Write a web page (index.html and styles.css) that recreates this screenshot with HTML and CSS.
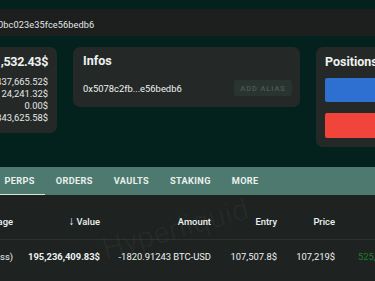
FILE: index.html
```html
<!DOCTYPE html>
<html lang="en">
<head>
    <meta charset="UTF-8">
    <meta name="viewport" content="width=device-width, initial-scale=1.0">
    <title>Portfolio</title>
    <link rel="stylesheet" href="styles.css">
</head>
<body>
    <div class="topbar">
        <span class="address">0bc023e35fce56bedb6</span>
    </div>

    <div class="cards">
        <div class="card summary">
            <div class="total">$1,532.43$</div>
            <div class="line">1,437,665.52$</div>
            <div class="line">24,241.32$</div>
            <div class="line">0.00$</div>
            <div class="line">1,343,625.58$</div>
        </div>
        <div class="card infos">
            <h2>Infos</h2>
            <div class="infos-row">
                <span>0x5078c2fb...e56bedb6</span>
                <button class="alias-btn">ADD ALIAS</button>
            </div>
        </div>
        <div class="card positions">
            <h2>Positions</h2>
            <div class="bar long"></div>
            <div class="bar short"></div>
        </div>
    </div>

    <div class="tabs">
        <div class="tab active">PERPS</div>
        <div class="tab">ORDERS</div>
        <div class="tab">VAULTS</div>
        <div class="tab">STAKING</div>
        <div class="tab">MORE</div>
    </div>

    <div class="table">
        <div class="watermark">Hyperliquid</div>
        <div class="row head">
            <div>Leverage</div>
            <div><span class="arrow">&#8595;</span> Value</div>
            <div>Amount</div>
            <div>Entry</div>
            <div>Price</div>
            <div class="pnl-head">PNL</div>
        </div>
        <div class="row">
            <div>20x (Cross)</div>
            <div class="strong">195,236,409.83$</div>
            <div>-1820.91243 BTC-USD</div>
            <div>107,507.8$</div>
            <div>107,219$</div>
            <div class="pnl">525,5</div>
        </div>
    </div>
</body>
</html>
```

FILE: styles.css
```css
body {
    margin: 0;
    background-color: #03221e;
    font-family: Roboto, "Liberation Sans", sans-serif;
    color: #eef2f1;
    overflow: hidden;
    width: 375px;
    height: 281px;
}
.topbar {
    margin-top: 9px;
    height: 27px;
    background-color: #1c1f1e;
    display: flex;
    align-items: center;
}
.address {
    margin-left: -2px;
    margin-top: 4px;
    font-size: 9.2px;
    letter-spacing: 0.1px;
    color: #e4e8e6;
}
.cards {
    display: flex;
    align-items: flex-start;
    margin-top: 11px;
    margin-left: -63px;
    gap: 16px;
}
.card {
    background-color: #242927;
    border-radius: 7px;
    flex-shrink: 0;
}
.summary {
    width: 111px;
    height: 86px;
    padding-right: 9px;
    text-align: right;
}
.total {
    font-size: 12.5px;
    font-weight: 700;
    letter-spacing: -0.3px;
    line-height: 16px;
    margin-top: 7px;
    margin-bottom: 6px;
}
.line {
    font-size: 9.4px;
    line-height: 11.9px;
    color: #e6eae8;
}
.infos {
    width: 207px;
    height: 60px;
    padding: 0 10px;
}
h2 {
    margin: 6px 0 0;
    font-size: 12.5px;
    font-weight: 700;
    line-height: 16px;
}
.infos-row {
    display: flex;
    justify-content: space-between;
    align-items: center;
    margin-top: 11px;
    font-size: 9.4px;
}
.alias-btn {
    background-color: #29332f;
    border: none;
    border-radius: 3px;
    color: #4b5b56;
    font-family: inherit;
    font-size: 7.5px;
    font-weight: 500;
    letter-spacing: 0.9px;
    width: 58px;
    height: 16px;
    padding: 0;
    margin-right: -2px;
}
.positions {
    width: 100px;
    height: 100px;
    padding-left: 9px;
}
.positions h2 {
    margin-top: 7px;
}
.bar {
    height: 24px;
    border-radius: 2px;
}
.long {
    background-color: #2e6fd2;
    margin-top: 8px;
}
.short {
    background-color: #f1443a;
    margin-top: 11px;
    height: 25px;
}
.tabs {
    margin-top: 20px;
    height: 28px;
    background-color: #4e796e;
    display: flex;
    margin-left: -6px;
}
.tab {
    padding: 0 10.5px;
    font-size: 9.2px;
    font-weight: 700;
    letter-spacing: 0.35px;
    color: #e8f0ed;
    display: flex;
    align-items: center;
    border-bottom: 2px solid transparent;
    margin-bottom: -1px;
}
.tab.active {
    border-bottom-color: #d8e2df;
}
.table {
    position: relative;
    background-color: #1e2322;
    height: 90px;
}
.watermark {
    position: absolute;
    left: 100px;
    top: 16px;
    font-size: 30px;
    color: rgba(255, 255, 255, 0.03);
    transform: rotate(-16deg);
}
.row {
    display: grid;
    grid-template-columns: 100px 87px 111px 66px 58px 110px;
    margin-left: -87px;
    font-size: 9.4px;
    text-align: right;
    align-items: center;
}
.row.head {
    height: 36px;
    padding-top: 8px;
    font-weight: 500;
    border-bottom: 1px solid #2c3230;
}
.row:not(.head) {
    height: 32px;
}
.arrow {
    font-size: 12px;
    font-weight: 400;
}
.strong {
    font-weight: 700;
}
.pnl {
    text-align: left;
    padding-left: 23px;
    color: #1c7f2a;
}
.pnl-head {
    visibility: hidden;
}
```
